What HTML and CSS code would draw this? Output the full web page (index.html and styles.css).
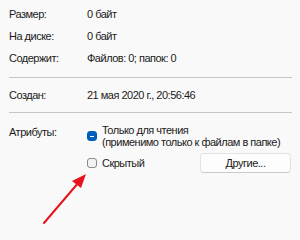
FILE: index.html
```html
<!DOCTYPE html>
<html lang="ru">
<head>
    <meta charset="UTF-8">
    <title>Свойства</title>
    <link rel="stylesheet" href="styles.css">
</head>
<body>
    <div class="props">
        <div class="group">
            <div class="row"><span class="label">Размер:</span><span class="value">0 байт</span></div>
            <div class="row"><span class="label">На диске:</span><span class="value">0 байт</span></div>
            <div class="row"><span class="label">Содержит:</span><span class="value">Файлов: 0; папок: 0</span></div>
        </div>
        <hr class="sep">
        <div class="row"><span class="label">Создан:</span><span class="value">21 мая 2020 г., 20:56:46</span></div>
        <hr class="sep">
        <div class="row attrs">
            <span class="label">Атрибуты:</span>
            <div class="attr-list">
                <label class="check">
                    <span class="box mixed"></span>
                    <span>Только для чтения<br>(применимо только к файлам в папке)</span>
                </label>
                <div class="check-line">
                    <label class="check"><span class="box"></span><span>Скрытый</span></label>
                    <button class="btn">Другие...</button>
                </div>
            </div>
        </div>
    </div>

    <!-- red pointer drawn over the dialog -->
    <svg class="arrow" width="300" height="240" viewBox="0 0 300 240">
        <line x1="44" y1="223" x2="79" y2="182" stroke="#e8141b" stroke-width="2" stroke-linecap="round"/>
        <polygon points="86,174 81,188 72,181" fill="#e8141b"/>
    </svg>
</body>
</html>
```

FILE: styles.css
```css
body {
    margin: 0;
    padding: 0;
    background-color: #f9f9f9;
    color: #1b1b1b;
    font-family: "Liberation Sans", Arial, sans-serif;
    font-size: 11px;
    letter-spacing: -0.5px;
    width: 300px;
    height: 240px;
    overflow: hidden;
    position: relative;
}
.props {
    padding: 3px 8px 0 9px;
}
.group {
    padding-bottom: 2px;
}
.row {
    display: flex;
    align-items: center;
    height: 22px;
    line-height: 16px;
}
.label {
    width: 78px;
    flex-shrink: 0;
}
.sep {
    border: none;
    border-top: 1px solid #c6c6c6;
    margin: 6px 0;
}
.attrs {
    align-items: flex-start;
    height: auto;
    padding-top: 5px;
}
.attr-list {
    display: flex;
    flex-direction: column;
    flex: 1;
}
.check {
    display: flex;
    align-items: center;
    gap: 5px;
    line-height: 12px;
}
.box {
    width: 10px;
    height: 10px;
    box-sizing: border-box;
    border: 1px solid #8a8a8a;
    border-radius: 3px;
    background-color: #f3f3f3;
    position: relative;
    flex-shrink: 0;
}
.box.mixed {
    background-color: #005fb8;
    border-color: #005fb8;
}
.box.mixed::after {
    content: "";
    position: absolute;
    left: 2px;
    top: 4px;
    width: 4px;
    height: 1px;
    background-color: #fff;
}
.check-line {
    display: flex;
    justify-content: space-between;
    align-items: center;
    margin-top: 5px;
}
.btn {
    width: 91px;
    height: 20px;
    margin-right: 1px;
    padding: 0;
    font: inherit;
    letter-spacing: inherit;
    color: #1b1b1b;
    background-color: #fdfdfd;
    border: 1px solid #e2e2e2;
    border-bottom-color: #cbcbcb;
    border-radius: 4px;
}
.arrow {
    position: absolute;
    left: 0;
    top: 0;
}
```
